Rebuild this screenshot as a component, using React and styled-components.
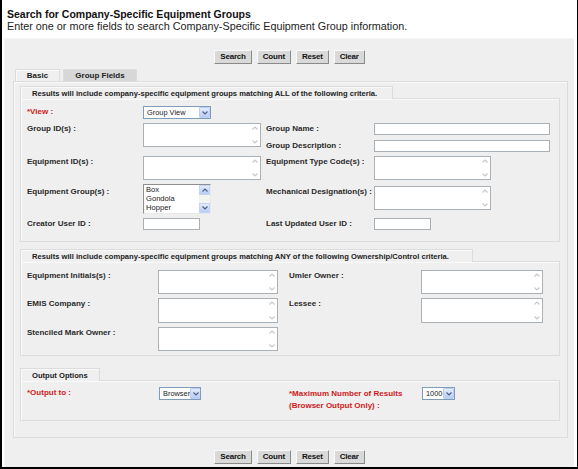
import React from 'react';
import styled, { createGlobalStyle } from 'styled-components';

const GlobalStyle = createGlobalStyle`
  body {
    margin: 0;
    font-family: "Liberation Sans", Arial, sans-serif;
  }
`;

const Frame = styled.div`
  width: 578px;
  height: 469px;
  box-sizing: border-box;
  border-left: 2px solid #000;
  border-right: 1px solid #000;
  border-bottom: 2px solid #000;
  background: #fff;
  display: flex;
  flex-direction: column;
`;

const Header = styled.div`
  height: 38px;
  box-sizing: border-box;
  padding: 8px 0 0 5px;
`;

const Title = styled.h1`
  margin: 0;
  font-size: 10.5px;
  line-height: 12px;
  font-weight: bold;
  color: #111;
`;

const Subtitle = styled.div`
  font-size: 10.8px;
  line-height: 12px;
  color: #222;
`;

const Panel = styled.div`
  flex: 1;
  margin: 0 3px 0 2px;
  background: #efefef;
  border-top: 1px solid #f7f7f7;
  border-left: 1px solid #f7f7f7;
  padding-top: 11px;
  display: flex;
  flex-direction: column;
`;

const ButtonRow = styled.div`
  display: flex;
  justify-content: center;
  gap: 5px;
  margin-top: ${(p) => p.$top || 0}px;
`;

const Button = styled.button`
  height: 14px;
  padding: 0 5px;
  font-family: "Liberation Sans", Arial, sans-serif;
  font-size: 8px;
  font-weight: bold;
  letter-spacing: -0.2px;
  color: #111;
  background: #d9d9d9;
  border: 1px solid;
  border-color: #fafafa #8a8a8a #8a8a8a #fafafa;
  line-height: 12px;
  cursor: pointer;
`;

const Tabs = styled.div`
  display: flex;
  gap: 3px;
  margin: 5px 0 0 10px;
`;

const Tab = styled.div`
  height: 12px;
  line-height: 12px;
  font-size: 8px;
  font-weight: bold;
  color: #222;
  text-align: center;
  white-space: nowrap;
  width: ${(p) => p.$w}px;
  box-sizing: border-box;
  background: ${(p) => (p.$active ? '#efefef' : '#d7d7d7')};
  border: 1px solid #dcdcdc;
  border-bottom: none;
  box-shadow: ${(p) => (p.$active ? 'inset 1px 1px 0 #fafafa' : 'none')};
`;

const TabBody = styled.div`
  margin: 0 6px 0 8px;
  height: 357px;
  box-sizing: border-box;
  border: 1px solid #dcdcdc;
  box-shadow: inset 1px 1px 0 #f9f9f9;
  padding: 4px 7px 0 6px;
`;

const Group = styled.div`
  margin-top: ${(p) => p.$top || 0}px;
  display: flex;
  flex-direction: column;
  align-items: flex-start;
`;

const Legend = styled.div`
  position: relative;
  z-index: 1;
  height: 13px;
  line-height: 13px;
  box-sizing: border-box;
  padding: 0 0 0 11px;
  margin-bottom: -1px;
  width: ${(p) => p.$w}px;
  font-size: 7.6px;
  font-weight: bold;
  color: #222;
  background: #efefef;
  border: 1px solid #dcdcdc;
  border-bottom: none;
  box-shadow: inset 1px 1px 0 #fafafa;
  white-space: nowrap;
`;

const Box = styled.div`
  align-self: stretch;
  border: 1px solid #dcdcdc;
  box-shadow: inset 1px 1px 0 #fafafa;
  padding: ${(p) => p.$pad};
  display: grid;
  grid-template-columns: ${(p) => p.$cols};
  grid-template-rows: ${(p) => p.$rows || 'auto'};
  row-gap: 4px;
`;

const Label = styled.div`
  font-size: 8px;
  font-weight: bold;
  line-height: ${(p) => p.$lh || 10}px;
  padding-top: ${(p) => p.$pt ?? 1}px;
  color: ${(p) => (p.$req ? '#d01a1a' : '#2a2a2a')};
  grid-row: ${(p) => p.$row || 'auto'};
  grid-column: ${(p) => p.$col || 'auto'};
  white-space: nowrap;
`;

const Cell = styled.div`
  grid-row: ${(p) => p.$row || 'auto'};
  grid-column: ${(p) => p.$col || 'auto'};
  display: flex;
  align-items: flex-start;
  padding-top: ${(p) => p.$pt || 0}px;
`;

const TextInput = styled.div`
  width: ${(p) => p.$w}px;
  height: 12px;
  box-sizing: border-box;
  background: #fff;
  border: 1px solid #a9b0b6;
`;

const Area = styled.div`
  width: ${(p) => p.$w}px;
  height: ${(p) => p.$h || 24}px;
  box-sizing: border-box;
  background: #fff;
  border: 1px solid #a9b0b6;
  display: flex;
  justify-content: flex-end;
`;

const ScrollStrip = styled.div`
  width: 10px;
  display: flex;
  flex-direction: column;
  justify-content: space-between;
  align-items: center;
  padding: 2px 0;
`;

const SelectBox = styled.div`
  width: ${(p) => p.$w}px;
  height: 13px;
  box-sizing: border-box;
  background: #fff;
  border: 1px solid #7f9db9;
  display: flex;
  align-items: center;
  justify-content: space-between;
  font-size: 7.4px;
  color: #222;
  padding-left: 3px;
  white-space: nowrap;
  overflow: hidden;
`;

const DropBtn = styled.div`
  width: 11px;
  height: 11px;
  flex: none;
  box-sizing: border-box;
  background: linear-gradient(#e3ebfe, #b9cdf7);
  border: 1px solid #bccdf5;
  border-radius: 1px;
  display: flex;
  align-items: center;
  justify-content: center;
`;

const ListBox = styled.div`
  width: 68px;
  height: 30px;
  box-sizing: border-box;
  background: #fff;
  border: 1px solid;
  border-color: #8f8f8f #e8e8e8 #e8e8e8 #8f8f8f;
  display: flex;
`;

const ListItems = styled.div`
  flex: 1;
  font-size: 7.6px;
  line-height: 9px;
  color: #222;
  padding-left: 2px;
`;

const ListScroll = styled.div`
  width: 11px;
  background: #f4f4f0;
  display: flex;
  flex-direction: column;
  justify-content: space-between;
`;

const ScrollBtn = styled.div`
  height: 10px;
  background: linear-gradient(#e3ebfe, #b9cdf7);
  border: 1px solid #c4d3f6;
  box-sizing: border-box;
  display: flex;
  align-items: center;
  justify-content: center;
`;

const Chevron = ({ up, color = '#c9c9c9', size = 6 }) => (
  <svg width={size} height={size - 2} viewBox="0 0 6 4">
    <path
      d={up ? 'M0.5 3.5 L3 1 L5.5 3.5' : 'M0.5 0.5 L3 3 L5.5 0.5'}
      fill="none"
      stroke={color}
      strokeWidth="1.2"
    />
  </svg>
);

const TextArea = ({ w, h }) => (
  <Area $w={w} $h={h}>
    <ScrollStrip>
      <Chevron up />
      <Chevron />
    </ScrollStrip>
  </Area>
);

const Select = ({ w, value }) => (
  <SelectBox $w={w}>
    <span>{value}</span>
    <DropBtn>
      <Chevron color="#4d6185" size={6} />
    </DropBtn>
  </SelectBox>
);

const Buttons = ({ top }) => (
  <ButtonRow $top={top}>
    <Button>Search</Button>
    <Button>Count</Button>
    <Button>Reset</Button>
    <Button>Clear</Button>
  </ButtonRow>
);

export default function App() {
  return (
    <Frame>
      <GlobalStyle />
      <Header>
        <Title>Search for Company-Specific Equipment Groups</Title>
        <Subtitle>
          Enter one or more fields to search Company-Specific Equipment Group information.
        </Subtitle>
      </Header>
      <Panel>
        <Buttons />
        <Tabs>
          <Tab $active $w={45}>Basic</Tab>
          <Tab $w={74}>Group Fields</Tab>
        </Tabs>
        <TabBody>
          <Group>
            <Legend $w={373}>
              Results will include company-specific equipment groups matching ALL of the following criteria.
            </Legend>
            <Box
              $pad="7px 0 10px 6px"
              $cols="116px 123px 108px 1fr"
              $rows="13px 13px 12px 24px 30px 13px"
            >
              <Label $req $row="1" $col="1">*View :</Label>
              <Cell $row="1" $col="2">
                <Select w={68} value="Group View" />
              </Cell>

              <Label $row="2" $col="1">Group ID(s) :</Label>
              <Cell $row="2 / span 2" $col="2">
                <TextArea w={118} h={24} />
              </Cell>
              <Label $row="2" $col="3">Group Name :</Label>
              <Cell $row="2" $col="4">
                <TextInput $w={176} />
              </Cell>
              <Label $row="3" $col="3">Group Description :</Label>
              <Cell $row="3" $col="4">
                <TextInput $w={176} />
              </Cell>

              <Label $row="4" $col="1">Equipment ID(s) :</Label>
              <Cell $row="4" $col="2">
                <TextArea w={118} h={24} />
              </Cell>
              <Label $row="4" $col="3">Equipment Type Code(s) :</Label>
              <Cell $row="4" $col="4">
                <TextArea w={117} h={24} />
              </Cell>

              <Label $row="5" $col="1" $pt={3}>Equipment Group(s) :</Label>
              <Cell $row="5" $col="2">
                <ListBox>
                  <ListItems>
                    <div>Box</div>
                    <div>Gondola</div>
                    <div>Hopper</div>
                  </ListItems>
                  <ListScroll>
                    <ScrollBtn>
                      <Chevron up color="#4d6185" size={6} />
                    </ScrollBtn>
                    <ScrollBtn>
                      <Chevron color="#4d6185" size={6} />
                    </ScrollBtn>
                  </ListScroll>
                </ListBox>
              </Cell>
              <Label $row="5" $col="3" $pt={3}>Mechanical Designation(s) :</Label>
              <Cell $row="5" $col="4" $pt={2}>
                <TextArea w={117} h={24} />
              </Cell>

              <Label $row="6" $col="1">Creator User ID :</Label>
              <Cell $row="6" $col="2">
                <TextInput $w={57} />
              </Cell>
              <Label $row="6" $col="3">Last Updated User ID :</Label>
              <Cell $row="6" $col="4">
                <TextInput $w={57} />
              </Cell>
            </Box>
          </Group>

          <Group $top={7}>
            <Legend $w={453}>
              Results will include company-specific equipment groups matching ANY of the following Ownership/Control criteria.
            </Legend>
            <Box $pad="8px 0 4px 6px" $cols="131px 131px 132px 1fr" $rows="24px 25px 24px">
              <Label $row="1" $col="1">Equipment Initials(s) :</Label>
              <Cell $row="1" $col="2">
                <TextArea w={120} h={24} />
              </Cell>
              <Label $row="1" $col="3">Umler Owner :</Label>
              <Cell $row="1" $col="4">
                <TextArea w={122} h={24} />
              </Cell>

              <Label $row="2" $col="1">EMIS Company :</Label>
              <Cell $row="2" $col="2">
                <TextArea w={120} h={25} />
              </Cell>
              <Label $row="2" $col="3">Lessee :</Label>
              <Cell $row="2" $col="4">
                <TextArea w={122} h={25} />
              </Cell>

              <Label $row="3" $col="1">Stenciled Mark Owner :</Label>
              <Cell $row="3" $col="2">
                <TextArea w={120} h={24} />
              </Cell>
            </Box>
          </Group>

          <Group $top={12}>
            <Legend $w={80}>Output Options</Legend>
            <Box $pad="6px 0 8px 6px" $cols="132px 130px 133px 1fr">
              <Label $req $col="1">*Output to :</Label>
              <Cell $col="2">
                <Select w={42} value="Browser" />
              </Cell>
              <Label $req $col="3" $lh={12}>
                *Maximum Number of Results
                <br />
                (Browser Output Only) :
              </Label>
              <Cell $col="4">
                <Select w={33} value="1000" />
              </Cell>
            </Box>
          </Group>
        </TabBody>
        <Buttons top={12} />
      </Panel>
    </Frame>
  );
}
